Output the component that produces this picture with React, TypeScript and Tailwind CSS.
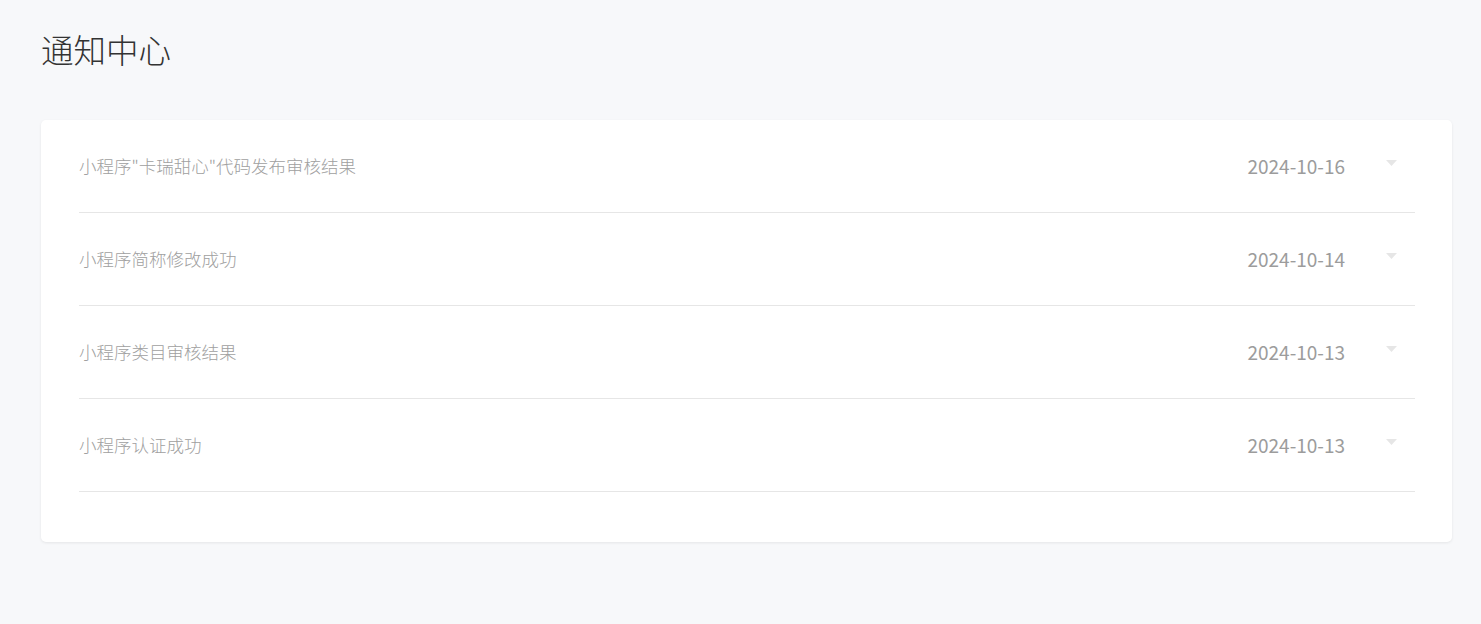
const notices = [
  { title: '小程序"卡瑞甜心"代码发布审核结果', date: '2024-10-16' },
  { title: '小程序简称修改成功', date: '2024-10-14' },
  { title: '小程序类目审核结果', date: '2024-10-13' },
  { title: '小程序认证成功', date: '2024-10-13' },
];

function Caret() {
  return (
    <svg width="11" height="6" viewBox="0 0 11 6" className="block">
      <path d="M0 0 L11 0 L5.5 6 Z" fill="#e6e6e6" />
    </svg>
  );
}

export default function App() {
  return (
    <div
      className="min-h-[624px] bg-[#f7f8fa] pl-[41px] pr-[29px] pt-[25px]"
      style={{ fontFamily: '"Noto Sans CJK SC", "Noto Sans", sans-serif' }}
    >
      <h1 className="text-[32.5px] leading-[48px] text-[#333333] font-light">通知中心</h1>

      <div className="mt-[47px] bg-white rounded-[5px] shadow-[0_1px_3px_rgba(0,0,0,0.08)] pl-[38px] pr-[37px] pb-[50px]">
        {notices.map((n, i) => (
          <div
            key={i}
            className="flex items-center h-[93px] border-b border-[#e6e6e6]"
          >
            <span className="flex-1 text-[17.5px] text-[#a0a0a0] font-light">{n.title}</span>
            <span className="text-[19px] text-[#9c9c9c]">{n.date}</span>
            <div className="ml-[41px] mr-[18px] -mt-[7px]">
              <Caret />
            </div>
          </div>
        ))}
      </div>
    </div>
  );
}
